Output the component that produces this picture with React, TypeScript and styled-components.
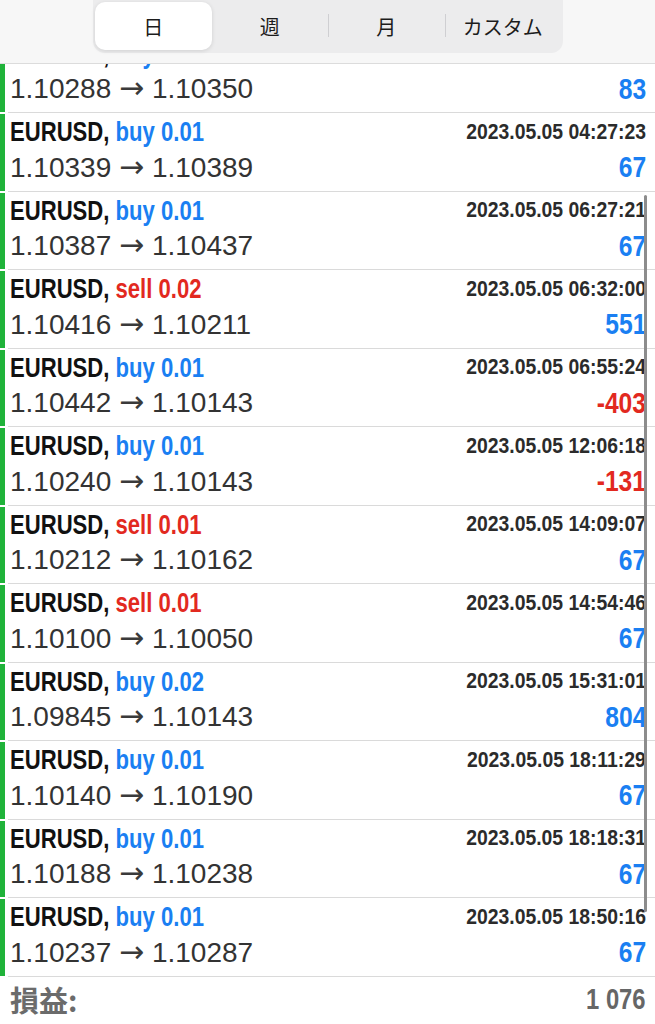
import React from "react";
import styled, { createGlobalStyle } from "styled-components";

const GlobalStyle = createGlobalStyle`
  html, body { margin: 0; padding: 0; background: #ffffff; }
  body { font-family: "Liberation Sans", Arial, sans-serif; -webkit-font-smoothing: antialiased; }
  * { box-sizing: border-box; }
`;

type Trade = {
  side: "buy" | "sell";
  lot: string;
  time: string;
  open: string;
  close: string;
  profit: string;
};

const trades: Trade[] = [
  { side: "buy", lot: "0.01", time: "2023.05.05 02:41:10", open: "1.10288", close: "1.10350", profit: "83" },
  { side: "buy", lot: "0.01", time: "2023.05.05 04:27:23", open: "1.10339", close: "1.10389", profit: "67" },
  { side: "buy", lot: "0.01", time: "2023.05.05 06:27:21", open: "1.10387", close: "1.10437", profit: "67" },
  { side: "sell", lot: "0.02", time: "2023.05.05 06:32:00", open: "1.10416", close: "1.10211", profit: "551" },
  { side: "buy", lot: "0.01", time: "2023.05.05 06:55:24", open: "1.10442", close: "1.10143", profit: "-403" },
  { side: "buy", lot: "0.01", time: "2023.05.05 12:06:18", open: "1.10240", close: "1.10143", profit: "-131" },
  { side: "sell", lot: "0.01", time: "2023.05.05 14:09:07", open: "1.10212", close: "1.10162", profit: "67" },
  { side: "sell", lot: "0.01", time: "2023.05.05 14:54:46", open: "1.10100", close: "1.10050", profit: "67" },
  { side: "buy", lot: "0.02", time: "2023.05.05 15:31:01", open: "1.09845", close: "1.10143", profit: "804" },
  { side: "buy", lot: "0.01", time: "2023.05.05 18:11:29", open: "1.10140", close: "1.10190", profit: "67" },
  { side: "buy", lot: "0.01", time: "2023.05.05 18:18:31", open: "1.10188", close: "1.10238", profit: "67" },
  { side: "buy", lot: "0.01", time: "2023.05.05 18:50:16", open: "1.10237", close: "1.10287", profit: "67" },
];

const BLUE = "#1a7ff2";
const RED = "#e2291f";
const BOLD = `"Liberation Sans", Arial, sans-serif`;

const Page = styled.div`
  width: 655px;
  height: 1024px;
  display: flex;
  flex-direction: column;
  overflow: hidden;
  background: #fff;
`;

const Header = styled.header`
  height: 64px;
  flex: none;
  background: #f7f7f7;
  border-bottom: 1px solid #dcdcdc;
  display: flex;
  justify-content: center;
  padding-left: 93px;
  padding-right: 92px;
`;

const Segmented = styled.div`
  width: 470px;
  height: 53px;
  background: #ececed;
  border-radius: 0 0 12px 12px;
  display: grid;
  grid-template-columns: repeat(4, 1fr);
  padding: 2px 2px 3px;
`;

const Segment = styled.div<{ $active?: boolean; $divider?: boolean }>`
  display: flex;
  align-items: center;
  justify-content: center;
  font-family: "Noto Sans CJK JP", "Noto Sans", sans-serif;
  font-size: 20px;
  color: #1c1c1c;
  border-radius: 10px;
  background: ${(p) => (p.$active ? "#ffffff" : "transparent")};
  box-shadow: ${(p) => (p.$active ? "0 1px 4px rgba(0,0,0,0.12)" : "none")};
  position: relative;
  &::before {
    content: "";
    display: ${(p) => (p.$divider ? "block" : "none")};
    position: absolute;
    left: 0;
    top: 12px;
    bottom: 13px;
    width: 1px;
    background: #cfcfd2;
  }
`;

const Viewport = styled.div`
  flex: none;
  height: 912.5px;
  overflow: hidden;
  position: relative;
`;

const List = styled.div`
  margin-top: -29.5px;
  display: flex;
  flex-direction: column;
`;

const Row = styled.div`
  height: 78.5px;
  display: flex;
`;

const Marker = styled.div`
  width: 5px;
  flex: none;
  margin: 1px 0 1px;
  background: #20b33a;
`;

const Body = styled.div`
  flex: 1;
  margin-left: 3px;
  padding: 0.5px 9px 0 2px;
  border-bottom: 1.5px solid #dadada;
  display: grid;
  grid-template-rows: 36px 36px;
`;

const Line = styled.div`
  display: flex;
  justify-content: space-between;
  align-items: center;
  white-space: nowrap;
`;

const Condensed = styled.div<{ $scale: number; $origin: "left" | "right" }>`
  display: inline-block;
  font-family: ${BOLD};
  font-weight: 700;
  transform: scaleX(${(p) => p.$scale});
  transform-origin: ${(p) => p.$origin} center;
`;

const Title = styled(Condensed)`
  font-size: 28.5px;
  color: #111;
`;

const Side = styled.span<{ $sell?: boolean }>`
  color: ${(p) => (p.$sell ? RED : BLUE)};
`;

const Time = styled(Condensed)`
  font-size: 22.5px;
  color: #2b2b2b;
`;

const Prices = styled.div`
  font-family: "Liberation Sans", Arial, sans-serif;
  font-size: 28px;
  color: #333;
`;

const Arrow = styled.span`
  font-family: "DejaVu Sans", sans-serif;
  font-size: 30px;
  line-height: 1;
  color: #3a3a3a;
`;

const Profit = styled(Condensed)<{ $neg?: boolean }>`
  font-size: 29px;
  color: ${(p) => (p.$neg ? RED : BLUE)};
`;

const Scrollbar = styled.div`
  position: absolute;
  left: 644px;
  top: 131px;
  width: 3px;
  height: 717px;
  border-radius: 2px;
  background: #8c8c8c;
`;

const Footer = styled.footer`
  flex: 1;
  display: flex;
  align-items: center;
  justify-content: space-between;
  padding: 0 9px 2px 10px;
`;

const FooterLabel = styled.div`
  font-family: "Noto Sans CJK JP", "Noto Sans", sans-serif;
  font-weight: 700;
  font-size: 29px;
  color: #6b6b6b;
`;

const FooterValue = styled(Condensed)`
  font-size: 29px;
  color: #666;
`;

export default function App() {
  return (
    <>
      <GlobalStyle />
      <Page>
        <Header>
          <Segmented>
            <Segment $active>日</Segment>
            <Segment>週</Segment>
            <Segment $divider>月</Segment>
            <Segment $divider>カスタム</Segment>
          </Segmented>
        </Header>
        <Viewport>
          <List>
            {trades.map((t, i) => (
              <Row key={i}>
                <Marker />
                <Body>
                  <Line>
                    <Title $scale={0.775} $origin="left">
                      EURUSD, <Side $sell={t.side === "sell"}>{t.side} {t.lot}</Side>
                    </Title>
                    <Time $scale={0.86} $origin="right">{t.time}</Time>
                  </Line>
                  <Line>
                    <Prices>
                      {t.open} <Arrow>→</Arrow> {t.close}
                    </Prices>
                    <Profit $scale={0.85} $origin="right" $neg={t.profit.startsWith("-")}>
                      {t.profit}
                    </Profit>
                  </Line>
                </Body>
              </Row>
            ))}
          </List>
          <Scrollbar />
        </Viewport>
        <Footer>
          <FooterLabel>損益:</FooterLabel>
          <FooterValue $scale={0.82} $origin="right">1 076</FooterValue>
        </Footer>
      </Page>
    </>
  );
}
